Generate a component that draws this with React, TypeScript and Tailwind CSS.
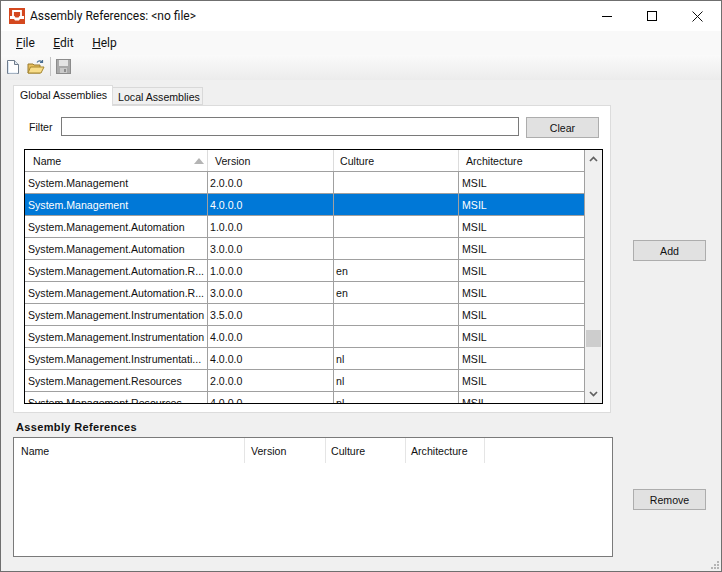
import React from "react";

const ROWS = [
  ["System.Management", "2.0.0.0", "", "MSIL"],
  ["System.Management", "4.0.0.0", "", "MSIL"],
  ["System.Management.Automation", "1.0.0.0", "", "MSIL"],
  ["System.Management.Automation", "3.0.0.0", "", "MSIL"],
  ["System.Management.Automation.R...", "1.0.0.0", "en", "MSIL"],
  ["System.Management.Automation.R...", "3.0.0.0", "en", "MSIL"],
  ["System.Management.Instrumentation", "3.5.0.0", "", "MSIL"],
  ["System.Management.Instrumentation", "4.0.0.0", "", "MSIL"],
  ["System.Management.Instrumentati...", "4.0.0.0", "nl", "MSIL"],
  ["System.Management.Resources", "2.0.0.0", "nl", "MSIL"],
  ["System.Management.Resources", "4.0.0.0", "nl", "MSIL"],
];

function WinButton({ label, className }: { label: string; className: string }) {
  return (
    <button className={`h-[21px] w-[73px] border border-[#adadad] bg-[#e1e1e1] text-center text-[10.6px] leading-[20px] text-[#111] ${className}`}>
      {label}
    </button>
  );
}

function AppIcon() {
  return (
    <svg width="16" height="16" viewBox="0 0 16 16">
      <rect width="16" height="16" fill="#d4481f" />
      <path d="M4 8.5V3h8v5.5" fill="none" stroke="#fff" strokeWidth="1.8" />
      <path d="M1 8h4.5l1 1.5h3l1-1.5H15v3h-4l-1 1.5H6L5 11H1z" fill="#fff" />
    </svg>
  );
}

function NewIcon() {
  return (
    <svg width="14" height="16" viewBox="0 0 14 16">
      <path d="M1.5 1.5h7l4 4v9h-11z" fill="#fff" stroke="#6f7c8c" />
      <path d="M8.5 1.5v4h4" fill="#dfe6ee" stroke="#6f7c8c" />
      <path d="M2.5 3v11h9" fill="none" stroke="#dbe8f6" />
    </svg>
  );
}

function OpenIcon() {
  return (
    <svg width="18" height="16" viewBox="0 0 18 16">
      <path d="M1 5h5l1 1h6v8H1z" fill="#e7bf5d" stroke="#9a7b2e" />
      <path d="M3.5 8H17l-3 6H1z" fill="#f8dd8a" stroke="#a5862f" />
      <path d="M10 3.5c1.5-2 3.5-2 5-.5M15.5 1v2.5H13" fill="none" stroke="#4a6f94" strokeWidth="1.2" />
    </svg>
  );
}

function SaveIcon() {
  return (
    <svg width="15" height="15" viewBox="0 0 15 15">
      <rect x="0.5" y="0.5" width="14" height="14" fill="#a9a9a9" stroke="#8b8b8b" />
      <rect x="3" y="1" width="9" height="6" fill="#e4e4e4" />
      <rect x="4" y="9" width="7" height="5" fill="#c9c9c9" />
      <rect x="8" y="10" width="2" height="3" fill="#8d8d8d" />
    </svg>
  );
}

function Chevron({ up }: { up?: boolean }) {
  return (
    <svg width="9" height="6" viewBox="0 0 9 6">
      <path d={up ? "M1 5l3.5-3.5L8 5" : "M1 1l3.5 3.5L8 1"} fill="none" stroke="#606060" strokeWidth="1.7" />
    </svg>
  );
}

function Grip() {
  return (
    <svg className="absolute bottom-[1px] right-[1px]" width="10" height="10" viewBox="0 0 10 10">
      <path d="M7 1h2v2H7zM4 4h2v2H4zM7 4h2v2H7zM1 7h2v2H1zM4 7h2v2H4zM7 7h2v2H7z" fill="#b5b5b5" />
    </svg>
  );
}

export default function App() {
  return (
    <div className="relative flex h-[572px] w-[722px] flex-col overflow-hidden border border-[#6f6f6f] bg-[#f0f0f0] text-[10.6px] text-[#111] font-['Liberation_Sans',Arial,sans-serif]">
      {/* title bar */}
      <div className="flex h-[30px] flex-none items-center bg-white pl-[8px] font-['Roboto',sans-serif]">
        <AppIcon />
        <span className="ml-[5px] text-[12px]">Assembly References: &lt;no file&gt;</span>
        <div className="ml-auto flex items-center gap-[35px] pr-[18px]">
          <span className="h-px w-[10px] bg-black" />
          <span className="h-[10px] w-[10px] border border-black" />
          <svg width="11" height="11" viewBox="0 0 11 11">
            <path d="M0.5 0.5l10 10M10.5 0.5l-10 10" stroke="#111" fill="none" />
          </svg>
        </div>
      </div>

      {/* menu */}
      <div className="flex h-[24px] flex-none items-center gap-[18.5px] bg-[#f9f9f9] pl-[15px] text-[12px] font-['Roboto',sans-serif]">
        <span><u>F</u>ile</span>
        <span><u>E</u>dit</span>
        <span><u>H</u>elp</span>
      </div>

      {/* toolbar */}
      <div className="flex h-[25px] flex-none items-center bg-gradient-to-b from-[#fafafa] to-[#ececec] pb-[2px] pl-[5px]">
        <NewIcon />
        <span className="ml-[7px]"><OpenIcon /></span>
        <span className="ml-[5px] h-[19px] w-px bg-[#c4c4c4]" />
        <span className="ml-[5px]"><SaveIcon /></span>
      </div>

      <div className="flex min-h-0 flex-1 pl-[12px]">
        <div className="flex w-[600px] flex-none flex-col pt-[6px]">
          {/* tabs */}
          <div className="flex h-[19px] items-end">
            <div className="z-10 mb-[-1px] flex h-[21px] w-[100px] flex-none justify-center whitespace-nowrap border border-b-0 border-[#dcdcdc] bg-white pl-[1px] pt-[2px]">Global Assemblies</div>
            <div className="flex h-[18px] w-[90px] flex-none justify-center whitespace-nowrap border border-l-0 border-[#d9d9d9] bg-[#f0f0f0] pl-[3px] pt-[2px]">Local Assemblies</div>
          </div>

          {/* tab page */}
          <div className="flex h-[308px] w-[598px] flex-col border border-[#dcdcdc] bg-white px-[10px] pt-[11px]">
            <div className="flex items-start">
              <span className="ml-[5px] mt-[3px] w-[32px]">Filter</span>
              <div className="h-[19px] w-[458px] border border-[#7a7a7a] bg-white" />
              <WinButton label="Clear" className="ml-[7px]" />
            </div>

            <div className="mt-[11px] flex h-[255px] w-[579px] border border-black bg-white">
              <div className="min-w-0 flex-1 overflow-hidden">
                <div className="flex h-[22px] items-center border-b border-[#a0a0a0]">
                  <div className="relative h-full w-[183px] flex-none border-r border-[#dcdcdc] pl-[8px] leading-[22px]">
                    Name
                    <svg className="absolute right-[3px] top-[8px]" width="10" height="6" viewBox="0 0 10 6">
                      <path d="M5 0l5 6H0z" fill="#b4b4b4" />
                    </svg>
                  </div>
                  <div className="h-full w-[126px] flex-none border-r border-[#dcdcdc] pl-[7px] leading-[22px]">Version</div>
                  <div className="h-full w-[125px] flex-none border-r border-[#dcdcdc] pl-[6px] leading-[22px]">Culture</div>
                  <div className="h-full flex-1 pl-[7px] leading-[22px]">Architecture</div>
                </div>
                {ROWS.map((row, i) => (
                  <div
                    key={i}
                    className={
                      i === 1
                        ? "flex h-[22px] flex-none border-b border-[#a0a0a0] bg-[#0078d7] leading-[23px] text-white"
                        : "flex h-[22px] flex-none border-b border-[#a0a0a0] leading-[23px]"
                    }
                  >
                    <div className="w-[183px] flex-none overflow-hidden whitespace-nowrap border-r border-[#a0a0a0] pl-[3px]">{row[0]}</div>
                    <div className="w-[126px] flex-none border-r border-[#a0a0a0] pl-[2px]">{row[1]}</div>
                    <div className="w-[125px] flex-none border-r border-[#a0a0a0] pl-[2px]">{row[2]}</div>
                    <div className="flex-1 pl-[3px]">{row[3]}</div>
                  </div>
                ))}
              </div>
              {/* scrollbar */}
              <div className="flex w-[18px] flex-none flex-col items-center border-l border-[#a0a0a0] bg-[#f0f0f0]">
                <div className="mt-[6px]"><Chevron up /></div>
                <div className="mt-[168px] h-[17px] w-[15px] bg-[#cdcdcd]" />
                <div className="mt-auto mb-[6px]"><Chevron /></div>
              </div>
            </div>
          </div>

          <div className="mt-[7px] h-[17px] pl-[3px] text-[11px] font-bold leading-[15px] tracking-[0.35px]">Assembly References</div>

          {/* references list */}
          <div className="h-[120px] w-[600px] border border-[#7a7a7a] bg-white">
            <div className="flex h-[25px] leading-[26px]">
              <div className="w-[231px] flex-none border-r border-[#e5e5e5] pl-[7px]">Name</div>
              <div className="w-[81px] flex-none border-r border-[#e5e5e5] pl-[6px]">Version</div>
              <div className="w-[80px] flex-none border-r border-[#e5e5e5] pl-[5px]">Culture</div>
              <div className="w-[79px] flex-none border-r border-[#e5e5e5] pl-[5px]">Architecture</div>
            </div>
          </div>
        </div>

        {/* right buttons */}
        <div className="ml-[20px] flex flex-col">
          <WinButton label="Add" className="mt-[160px]" />
          <WinButton label="Remove" className="mt-[228px]" />
        </div>
      </div>
      <Grip />
    </div>
  );
}
